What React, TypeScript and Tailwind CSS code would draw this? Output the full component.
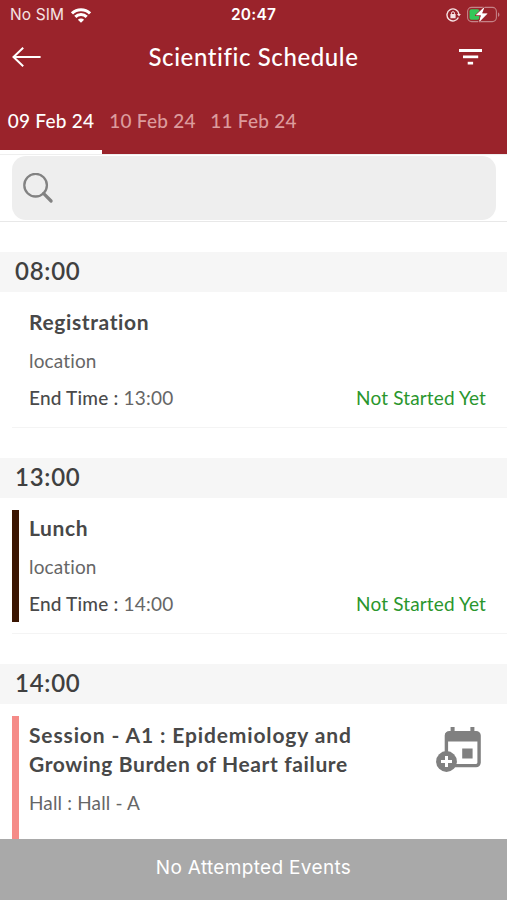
import React from 'react';

interface Session {
  time: string;
  title: string[];
  place: string;
  endTime?: string;
  accent: string;
  canAdd?: boolean;
}

const days = [
  { label: '09 Feb 24', active: true },
  { label: '10 Feb 24', active: false },
  { label: '11 Feb 24', active: false },
];

const sessions: Session[] = [
  { time: '08:00', title: ['Registration'], place: 'location', endTime: '13:00', accent: 'bg-white' },
  { time: '13:00', title: ['Lunch'], place: 'location', endTime: '14:00', accent: 'bg-[#3a1502]' },
  {
    time: '14:00',
    title: ['Session - A1 : Epidemiology and', 'Growing Burden of Heart failure'],
    place: 'Hall : Hall - A',
    accent: 'bg-[#f58b88]',
    canAdd: true,
  },
];

const WifiIcon = () => (
  <svg className="h-[15px] w-5" viewBox="0 0 20 15" fill="none" stroke="#fff" strokeWidth="3">
    <path d="M1 5.4a12.8 12.8 0 0 1 18 0" />
    <path d="M4.3 8.9a8 8 0 0 1 11.4 0" />
    <path d="M10 14.8 6.9 11.7a4.4 4.4 0 0 1 6.2 0Z" fill="#fff" stroke="none" />
  </svg>
);

const RotationLockIcon = () => (
  <svg className="h-[14px] w-[15px]" viewBox="0 0 15 14" fill="none" stroke="#f6e3e4" strokeWidth="1.4">
    <path d="M12.4 9.5A6 6 0 1 1 12.9 6" />
    <path d="M11 5.9h3.9L13 8.5Z" fill="#f6e3e4" stroke="none" />
    <rect x="4.4" y="6.1" width="5.2" height="4.1" rx=".5" fill="#f6e3e4" stroke="none" />
    <path d="M5.5 6.5V5.2a1.5 1.5 0 0 1 3 0v1.3" strokeWidth="1" />
  </svg>
);

const BatteryIcon = () => (
  <svg className="h-[18px] w-[33px]" viewBox="0 0 33 18">
    <rect x=".6" y="1.4" width="28.8" height="14.2" rx="4" fill="none" stroke="#c58287" strokeWidth="1.1" />
    <path d="M31 6.4c1.9.6 1.9 3.8 0 4.4Z" fill="#c58287" />
    <rect x="2.5" y="3.3" width="10" height="10.4" rx="2" fill="#35c759" />
    <path d="M17.6.2 8 9.5h5.5l-2.1 7.4 9.7-9.7h-5.6Z" fill="#fff" stroke="#9a232b" strokeWidth="1" />
    <path d="M17.6 1 8.8 9.2h5.4l-2 6.8 8.3-8.5h-5.6Z" fill="#fff" />
  </svg>
);

const BackIcon = () => (
  <svg className="h-5 w-[29px]" viewBox="0 0 29 20" fill="none" stroke="#fff" strokeWidth="2">
    <path d="M11.2.8 1.5 10l9.7 9.2M1.5 10H28.6" />
  </svg>
);

const FilterIcon = () => (
  <svg className="h-4 w-[23px]" viewBox="0 0 23 16" fill="#fff">
    <rect x="0" y="0" width="23" height="3" />
    <rect x="4" y="6.5" width="15.2" height="2.7" />
    <rect x="8.7" y="12.8" width="5.4" height="2.7" />
  </svg>
);

const SearchIcon = () => (
  <svg className="h-[31px] w-[31px]" viewBox="0 0 31 31" fill="none" stroke="#828282">
    <circle cx="12.6" cy="12.2" r="11.3" strokeWidth="2.3" />
    <path d="m20.5 20.4 7.6 7.6" strokeWidth="3.2" strokeLinecap="round" />
  </svg>
);

const AddToCalendarIcon = () => (
  <svg className="h-[46px] w-[45px]" viewBox="0 0 45 46">
    <rect x="10.4" y="6.6" width="32.7" height="33" rx="3" fill="none" stroke="#808080" strokeWidth="3.4" />
    <path d="M9.5 7h34.5v8.5H9.5ZM14.6 1h4v6h-4ZM34.4 1h4v6h-4ZM26.2 22.4h10.4v10H26.2Z" fill="#808080" />
    <circle cx="10.5" cy="35.5" r="10.4" fill="#808080" />
    <path d="M10.5 30v11M5 35.5h11" stroke="#fff" strokeWidth="3" />
  </svg>
);

const SessionCard: React.FC<{ session: Session }> = ({ session }) => (
  <section className="mb-[30px]">
    <h2 className="h-10 bg-[#f6f6f6] pl-[15px] text-2xl leading-[38px] font-semibold tracking-[0.75px] text-[#404040]">
      {session.time}
    </h2>
    <div className={`ml-3 flex border-b border-[#f4f4f4] pt-3 pb-[11px] ${session.endTime ? 'h-[136px]' : 'h-[174px]'}`}>
      <div className={`w-[7px] ${session.accent}`} />
      <div className={`flex-1 pr-[21px] pl-[10px] ${session.canAdd ? 'pt-1' : 'pt-[3px]'}`}>
        <div className="flex justify-between">
          <h3 className="text-[21px] leading-[29px] font-bold tracking-[0.62px] text-[#484848]">
            {session.title.map((line) => (
              <span key={line} className="block whitespace-nowrap first:not-last:tracking-[0.87px]">{line}</span>
            ))}
          </h3>
          {session.canAdd && (
            <button className="mt-[6px] mr-[5px] h-[46px]">
              <AddToCalendarIcon />
            </button>
          )}
        </div>
        <p className="mt-3 text-[19px] leading-[26px] tracking-[0.15px] text-[#666]">{session.place}</p>
        {session.endTime && (
          <div className="mt-[11px] flex justify-between text-[19px] leading-[26px]">
            <p className="tracking-[0.2px] text-[#666]">
              <span className="font-medium text-[#4a4a4a]">End Time :</span> {session.endTime}
            </p>
            <p className="tracking-[0.15px] text-[#2a962d]">Not Started Yet</p>
          </div>
        )}
      </div>
    </div>
  </section>
);

export default function App() {
  return (
    <div className="flex h-[900px] w-[507px] flex-col overflow-hidden bg-white font-['Lato',sans-serif]">
      <header className="h-[154px] shrink-0 bg-[#9a232b] text-white">
        <div className="grid h-[30px] grid-cols-3 items-center pr-[7px] pl-[10px] font-['Inter',sans-serif] text-[15.5px]">
          <div className="flex items-center gap-[7px] text-[#f6e3e4]">
            <span className="tracking-[0.1px]">No SIM</span>
            <WifiIcon />
          </div>
          <span className="-ml-[3px] text-center font-semibold tracking-[0.2px]">20:47</span>
          <div className="flex items-center justify-end gap-[6px]">
            <RotationLockIcon />
            <BatteryIcon />
          </div>
        </div>
        <div className="flex h-[54px] items-center justify-between pr-[25px] pl-3">
          <BackIcon />
          <h1 className="ml-[7px] text-2xl font-medium tracking-[0.6px]">Scientific Schedule</h1>
          <FilterIcon />
        </div>
        <nav className="flex h-[70px] text-[19px] font-medium tracking-[0.25px]">
          {days.map((day) => (
            <button
              key={day.label}
              className={`mt-2 shrink-0 border-b-4 ${
                day.active ? 'w-[102px] border-white text-white' : 'w-[101px] border-transparent text-[#dc9b9d]'
              }`}
            >
              {day.label}
            </button>
          ))}
        </nav>
      </header>

      <div className="h-[68px] shrink-0 border-y border-t-[#eee] border-b-[#e8e8e8] px-3 pt-px">
        <div className="flex h-16 w-[484px] items-center rounded-[14px] bg-[#eee] pl-[11px]">
          <SearchIcon />
        </div>
      </div>

      <main className="min-h-0 flex-1 overflow-hidden pt-[30px]">
        {sessions.map((session) => (
          <SessionCard key={session.time} session={session} />
        ))}
      </main>

      <footer className="h-[61px] shrink-0 bg-[#a9a9a9] text-center font-['Inter',sans-serif] text-[19px] leading-[57px] tracking-[0.33px] text-white">
        No Attempted Events
      </footer>
    </div>
  );
}
